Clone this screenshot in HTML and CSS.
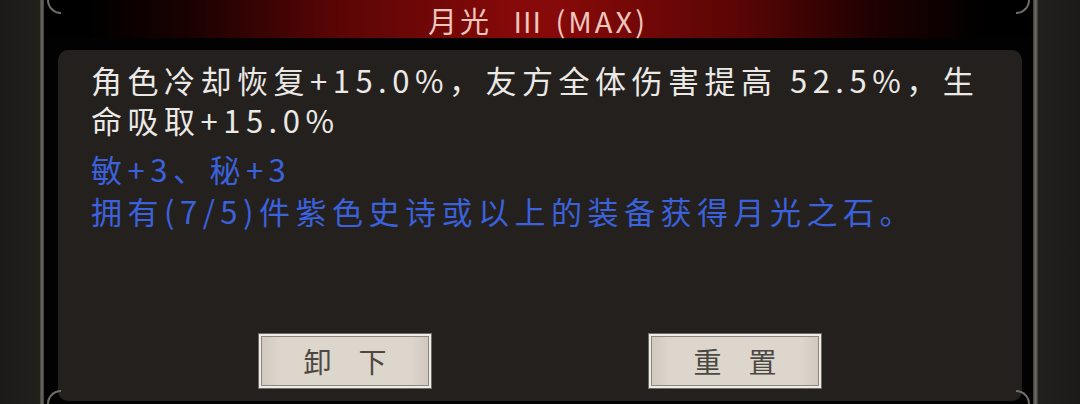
FILE: index.html
```html
<!DOCTYPE html>
<html lang="zh">
<head>
    <meta charset="UTF-8">
    <meta name="viewport" content="width=device-width, initial-scale=1.0">
    <title>月光</title>
    <link rel="stylesheet" href="styles.css">
</head>
<body>
    <div class="screen">
        <div class="side"></div>
        <div class="rail"></div>

        <div class="dialog">
            <div class="title-bar">月光 <span class="rank">III</span> (MAX)</div>

            <div class="panel">
                <div class="desc">
                    <p class="effect">角色冷却恢复+15.0%，友方全体伤害提高 52.5%，生命吸取+15.0%</p>
                    <p class="bonus">敏+3、秘+3<br>拥有(7/5)件紫色史诗或以上的装备获得月光之石。</p>
                </div>

                <div class="actions">
                    <button class="btn">卸下</button>
                    <button class="btn">重置</button>
                </div>
            </div>

            <span class="corner corner-tl"></span>
            <span class="corner corner-tr"></span>
            <span class="corner corner-bl"></span>
            <span class="corner corner-br"></span>
        </div>

        <div class="rail rail-right"></div>
        <div class="side side-right"></div>
    </div>
</body>
</html>
```

FILE: styles.css
```css
html, body {
    margin: 0;
    padding: 0;
}

body {
    width: 1080px;
    height: 404px;
    overflow: hidden;
    background-color: #1e1c1a;
    font-family: "Noto Sans CJK SC", "Noto Sans", sans-serif;
}

.screen {
    display: flex;
    height: 404px;
}

.side {
    width: 40px;
    background: linear-gradient(90deg, #1b1a18, #22201d);
}

.side-right {
    width: 42px;
    background: linear-gradient(90deg, #22201d, #1b1a18);
}

.rail {
    width: 4px;
    background: linear-gradient(90deg, #3f3e38, #6d6c63 50%, #3a3934);
}

.rail-right {
    width: 5px;
}

.dialog {
    flex: 1;
    display: flex;
    flex-direction: column;
    background-color: #030202;
    position: relative;
}

.title-bar {
    height: 38px;
    margin: 0 5px 0 4px;
    border-radius: 0 0 4px 4px;
    background: linear-gradient(90deg, #000 4%, #1c0101 15%, #5c0505 30%, #860a09 48%, #860a09 52%, #5c0505 70%, #1c0101 85%, #000 96%);
    color: #eec6bd;
    font-size: 29px;
    line-height: 40px;
    text-align: center;
    letter-spacing: 3px;
}

.rank {
    letter-spacing: 1px;
    margin: 0 4px 0 12px;
}

.panel {
    flex: 1;
    display: flex;
    flex-direction: column;
    margin: 12px 11px 3px 14px;
    padding: 10px 0 12px;
    background-color: #23201d;
    border-radius: 10px;
}

.desc {
    flex: 1;
    padding: 0 30px 0 33px;
}

.desc p {
    margin: 0;
    font-size: 31px;
    line-height: 40px;
    letter-spacing: 5.5px;
}

.effect {
    color: #ebe9e6;
}

.bonus {
    margin-top: 8px !important;
    color: #3b61dc;
    line-height: 42px !important;
}

.actions {
    display: flex;
    justify-content: center;
    gap: 216px;
}

.btn {
    width: 174px;
    height: 56px;
    padding: 0 0 0 27px;
    border: 1px solid #6f6b65;
    background: linear-gradient(90deg, #cfc7bd, #ddd6cc 12%, #ddd6cc 88%, #cfc7bd);
    box-shadow: inset 0 0 0 2px #efebe6, inset 0 0 0 3px #8c867f;
    color: #4c4843;
    font-family: "Noto Sans CJK SC", sans-serif;
    font-size: 28px;
    letter-spacing: 27px;
    cursor: pointer;
}

.corner {
    position: absolute;
    width: 14px;
    height: 22px;
    border: 2px solid #6f6e65;
    box-sizing: border-box;
}

.corner-tl {
    left: 3px;
    top: -8px;
    border-right: none;
    border-top: none;
    border-radius: 0 0 0 14px;
}

.corner-tr {
    right: 3px;
    top: -8px;
    border-left: none;
    border-top: none;
    border-radius: 0 0 14px 0;
}

.corner-bl {
    left: 3px;
    bottom: -8px;
    border-right: none;
    border-bottom: none;
    border-radius: 14px 0 0 0;
}

.corner-br {
    right: 3px;
    bottom: -8px;
    border-left: none;
    border-bottom: none;
    border-radius: 0 14px 0 0;
}
```
